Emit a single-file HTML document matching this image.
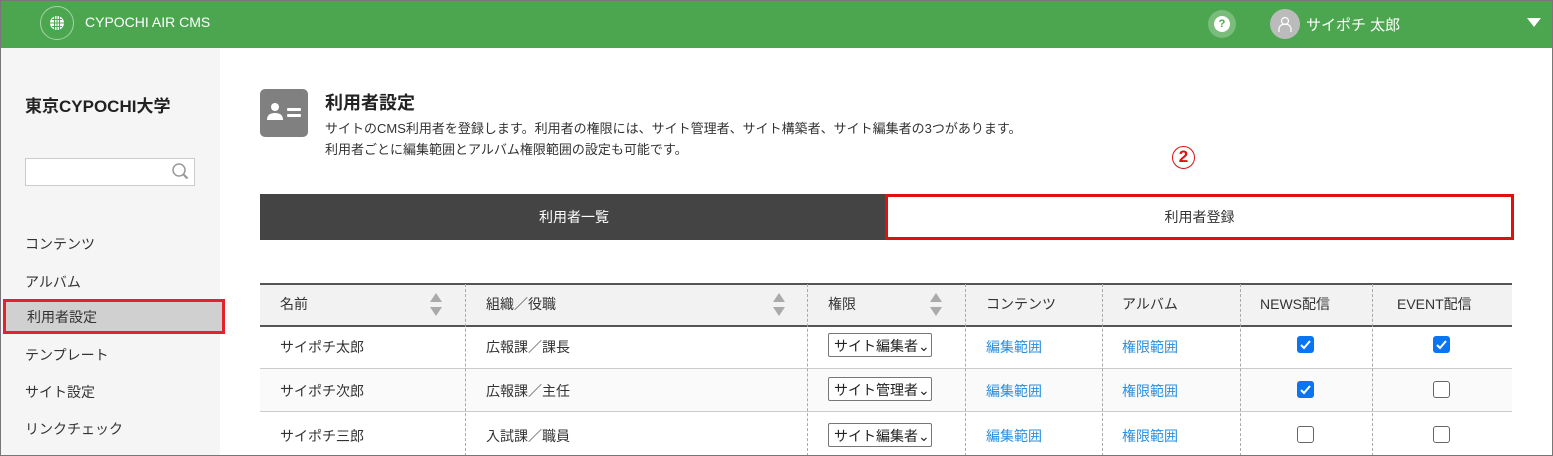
<!DOCTYPE html>
<html><head><meta charset="utf-8"><style>
*{box-sizing:border-box;margin:0;padding:0}
body{width:1553px;height:456px;overflow:hidden;font-family:"Liberation Sans","Noto Sans CJK JP",sans-serif;color:#333;background:#fff;position:relative}
.frame{position:absolute;left:0;top:0;width:1553px;height:456px;border:1px solid #777;z-index:10;pointer-events:none}
.hdr{position:absolute;left:0;top:0;width:1553px;height:48px;background:#4ca64f;color:#fff}
.side{position:absolute;left:0;top:48px;width:220px;height:408px;background:#f5f5f5}
.abs{position:absolute}
.nav{position:absolute;left:25px;font-size:14px;color:#333}
.cell{position:absolute;font-size:14px}
.link{color:#2a8fe0}
.cb{position:absolute;width:17px;height:17px;border-radius:3px}
.cb.on{background:#0a75f0}
.cb.off{border:1.5px solid #666;background:#fff}
.sel{position:absolute;left:828px;width:104px;height:24px;border:1px solid #777;border-radius:2px;background:#fff;font-size:14px;padding:2px 0 0 5px;color:#222}
.vd{position:absolute;width:0;border-left:1px dashed #aaa}
.sort{position:absolute;width:12px;height:24px}
.sort:before{content:"";position:absolute;left:0;top:0;border-left:6px solid transparent;border-right:6px solid transparent;border-bottom:9px solid #aaa}
.sort:after{content:"";position:absolute;left:0;top:14px;border-left:6px solid transparent;border-right:6px solid transparent;border-top:9px solid #aaa}
</style></head><body>
<div class="frame"></div>
<div class="hdr">
 <div class="abs" style="left:40px;top:6px;width:34px;height:34px;border-radius:50%;border:1px solid rgba(255,255,255,.5)"></div>
 <svg class="abs" style="left:49px;top:15px" width="16" height="16" viewBox="0 0 16 16"><circle cx="8" cy="8" r="7" fill="#fff"/><path d="M1 8h14M8 1v14M3 4.5h10M3 11.5h10M5.5 1.5v13M10.5 1.5v13" stroke="#4ca64f" stroke-width="1"/></svg>
 <div class="abs" style="left:85px;top:14px;font-size:14px">CYPOCHI AIR CMS</div>
 <div class="abs" style="left:1208px;top:10px;width:28px;height:28px;border-radius:50%;background:rgba(255,255,255,.25)"></div>
 <div class="abs" style="left:1214px;top:16px;width:16px;height:16px;border-radius:50%;background:#fff;color:#4ca64f;font-size:11px;font-weight:bold;text-align:center;line-height:16px">?</div>
 <div class="abs" style="left:1270px;top:9px;width:30px;height:30px;border-radius:50%;background:#bbb"></div>
 <svg class="abs" style="left:1276px;top:15px" width="18" height="18" viewBox="0 0 18 18"><circle cx="9" cy="6" r="3.5" fill="none" stroke="#fff" stroke-width="1.2"/><path d="M3 17v-3a6 5 0 0 1 12 0v3" fill="none" stroke="#fff" stroke-width="1.2"/></svg>
 <div class="abs" style="left:1306px;top:14px;font-size:15px">サイポチ 太郎</div>
 <div class="abs" style="left:1527px;top:18px;width:0;height:0;border-left:7px solid transparent;border-right:7px solid transparent;border-top:9px solid #fff"></div>
</div>
<div class="side">
 <div class="abs" style="left:25px;top:44px;font-size:17px;font-weight:bold;color:#222">東京CYPOCHI大学</div>
 <div class="abs" style="left:25px;top:110px;width:170px;height:28px;background:#fff;border:1px solid #ccc"></div>
 <svg class="abs" style="left:171px;top:114px" width="20" height="20" viewBox="0 0 20 20"><circle cx="8" cy="8" r="6" fill="none" stroke="#999" stroke-width="1.5"/><path d="M12.5 12.5l4 4" stroke="#999" stroke-width="2.2"/></svg>
 <div class="nav" style="top:186px">コンテンツ</div>
 <div class="nav" style="top:224px">アルバム</div>
 <div class="abs" style="left:3px;top:251px;width:222px;height:35px;background:#d0d0d0;border:3px solid #e8202a"></div>
 <div class="nav" style="top:259px;left:27px">利用者設定</div>
 <div class="nav" style="top:297px">テンプレート</div>
 <div class="nav" style="top:334px">サイト設定</div>
 <div class="nav" style="top:371px">リンクチェック</div>
</div>
<div class="abs" style="left:260px;top:89px;width:48px;height:48px;border-radius:5px;background:#808080"></div>
<svg class="abs" style="left:266px;top:100px" width="38" height="24" viewBox="0 0 38 24"><circle cx="9" cy="7" r="4" fill="#fff"/><path d="M1 20q0-7 8-7t8 7z" fill="#fff"/><rect x="21" y="8" width="14" height="3" rx="1" fill="#fff"/><rect x="21" y="14" width="14" height="3" rx="1" fill="#fff"/></svg>
<div class="abs" style="left:325px;top:89px;font-size:18px;font-weight:bold;color:#222">利用者設定</div>
<div class="abs" style="left:325px;top:118px;font-size:13px;color:#333;line-height:21px;white-space:nowrap">サイトのCMS利用者を登録します。利用者の権限には、サイト管理者、サイト構築者、サイト編集者の3つがあります。<br>利用者ごとに編集範囲とアルバム権限範囲の設定も可能です。</div>
<div class="abs" style="left:1172px;top:146px;width:23px;height:23px;border:1.5px solid #e01010;border-radius:50%;color:#e01010;font-size:17px;font-weight:bold;text-align:center;line-height:20px">2</div>
<div class="abs" style="left:260px;top:194px;width:628px;height:46px;background:#444;color:#fff;font-size:14px;text-align:center;line-height:46px">利用者一覧</div>
<div class="abs" style="left:885px;top:194px;width:629px;height:46px;background:#fff;border:3px solid #e01010;font-size:14px;text-align:center;line-height:40px;color:#333">利用者登録</div>
<div class="abs" style="left:260px;top:283px;width:1252px;height:44px;background:#f2f2f2;border-top:2px solid #555;border-bottom:2px solid #555"></div>
<div class="abs" style="left:260px;top:368px;width:1252px;height:44px;background:#fafafa;border-top:1px solid #ccc;border-bottom:1px solid #ccc"></div>
<div class="vd" style="left:465px;top:284px;height:172px"></div>
<div class="vd" style="left:807px;top:284px;height:172px"></div>
<div class="vd" style="left:965px;top:284px;height:172px"></div>
<div class="vd" style="left:1102px;top:284px;height:172px"></div>
<div class="vd" style="left:1240px;top:284px;height:172px"></div>
<div class="vd" style="left:1372px;top:284px;height:172px"></div>
<div class="cell" style="left:280px;top:294px">名前</div>
<div class="cell" style="left:486px;top:294px">組織／役職</div>
<div class="cell" style="left:828px;top:294px">権限</div>
<div class="cell" style="left:986px;top:294px">コンテンツ</div>
<div class="cell" style="left:1122px;top:294px">アルバム</div>
<div class="cell" style="left:1260px;top:294px">NEWS配信</div>
<div class="cell" style="left:1397px;top:294px">EVENT配信</div>
<div class="sort" style="left:430px;top:293px"></div>
<div class="sort" style="left:773px;top:293px"></div>
<div class="sort" style="left:930px;top:293px"></div>
<div class="cell" style="left:280px;top:337px">サイポチ太郎</div>
<div class="cell" style="left:486px;top:337px">広報課／課長</div>
<div class="sel" style="top:333px">サイト編集者⌄</div>
<div class="cell link" style="left:986px;top:337px">編集範囲</div>
<div class="cell link" style="left:1122px;top:337px">権限範囲</div>
<div class="cb on" style="left:1297px;top:336px"><svg width="17" height="17"><path d="M4 9l3 3 6-7" fill="none" stroke="#fff" stroke-width="2"/></svg></div>
<div class="cb on" style="left:1433px;top:336px"><svg width="17" height="17"><path d="M4 9l3 3 6-7" fill="none" stroke="#fff" stroke-width="2"/></svg></div>
<div class="cell" style="left:280px;top:381px">サイポチ次郎</div>
<div class="cell" style="left:486px;top:381px">広報課／主任</div>
<div class="sel" style="top:377px">サイト管理者⌄</div>
<div class="cell link" style="left:986px;top:381px">編集範囲</div>
<div class="cell link" style="left:1122px;top:381px">権限範囲</div>
<div class="cb on" style="left:1297px;top:381px"><svg width="17" height="17"><path d="M4 9l3 3 6-7" fill="none" stroke="#fff" stroke-width="2"/></svg></div>
<div class="cb off" style="left:1433px;top:381px"></div>
<div class="cell" style="left:280px;top:426px">サイポチ三郎</div>
<div class="cell" style="left:486px;top:426px">入試課／職員</div>
<div class="sel" style="top:423px">サイト編集者⌄</div>
<div class="cell link" style="left:986px;top:426px">編集範囲</div>
<div class="cell link" style="left:1122px;top:426px">権限範囲</div>
<div class="cb off" style="left:1297px;top:426px"></div>
<div class="cb off" style="left:1433px;top:426px"></div>
</body></html>
